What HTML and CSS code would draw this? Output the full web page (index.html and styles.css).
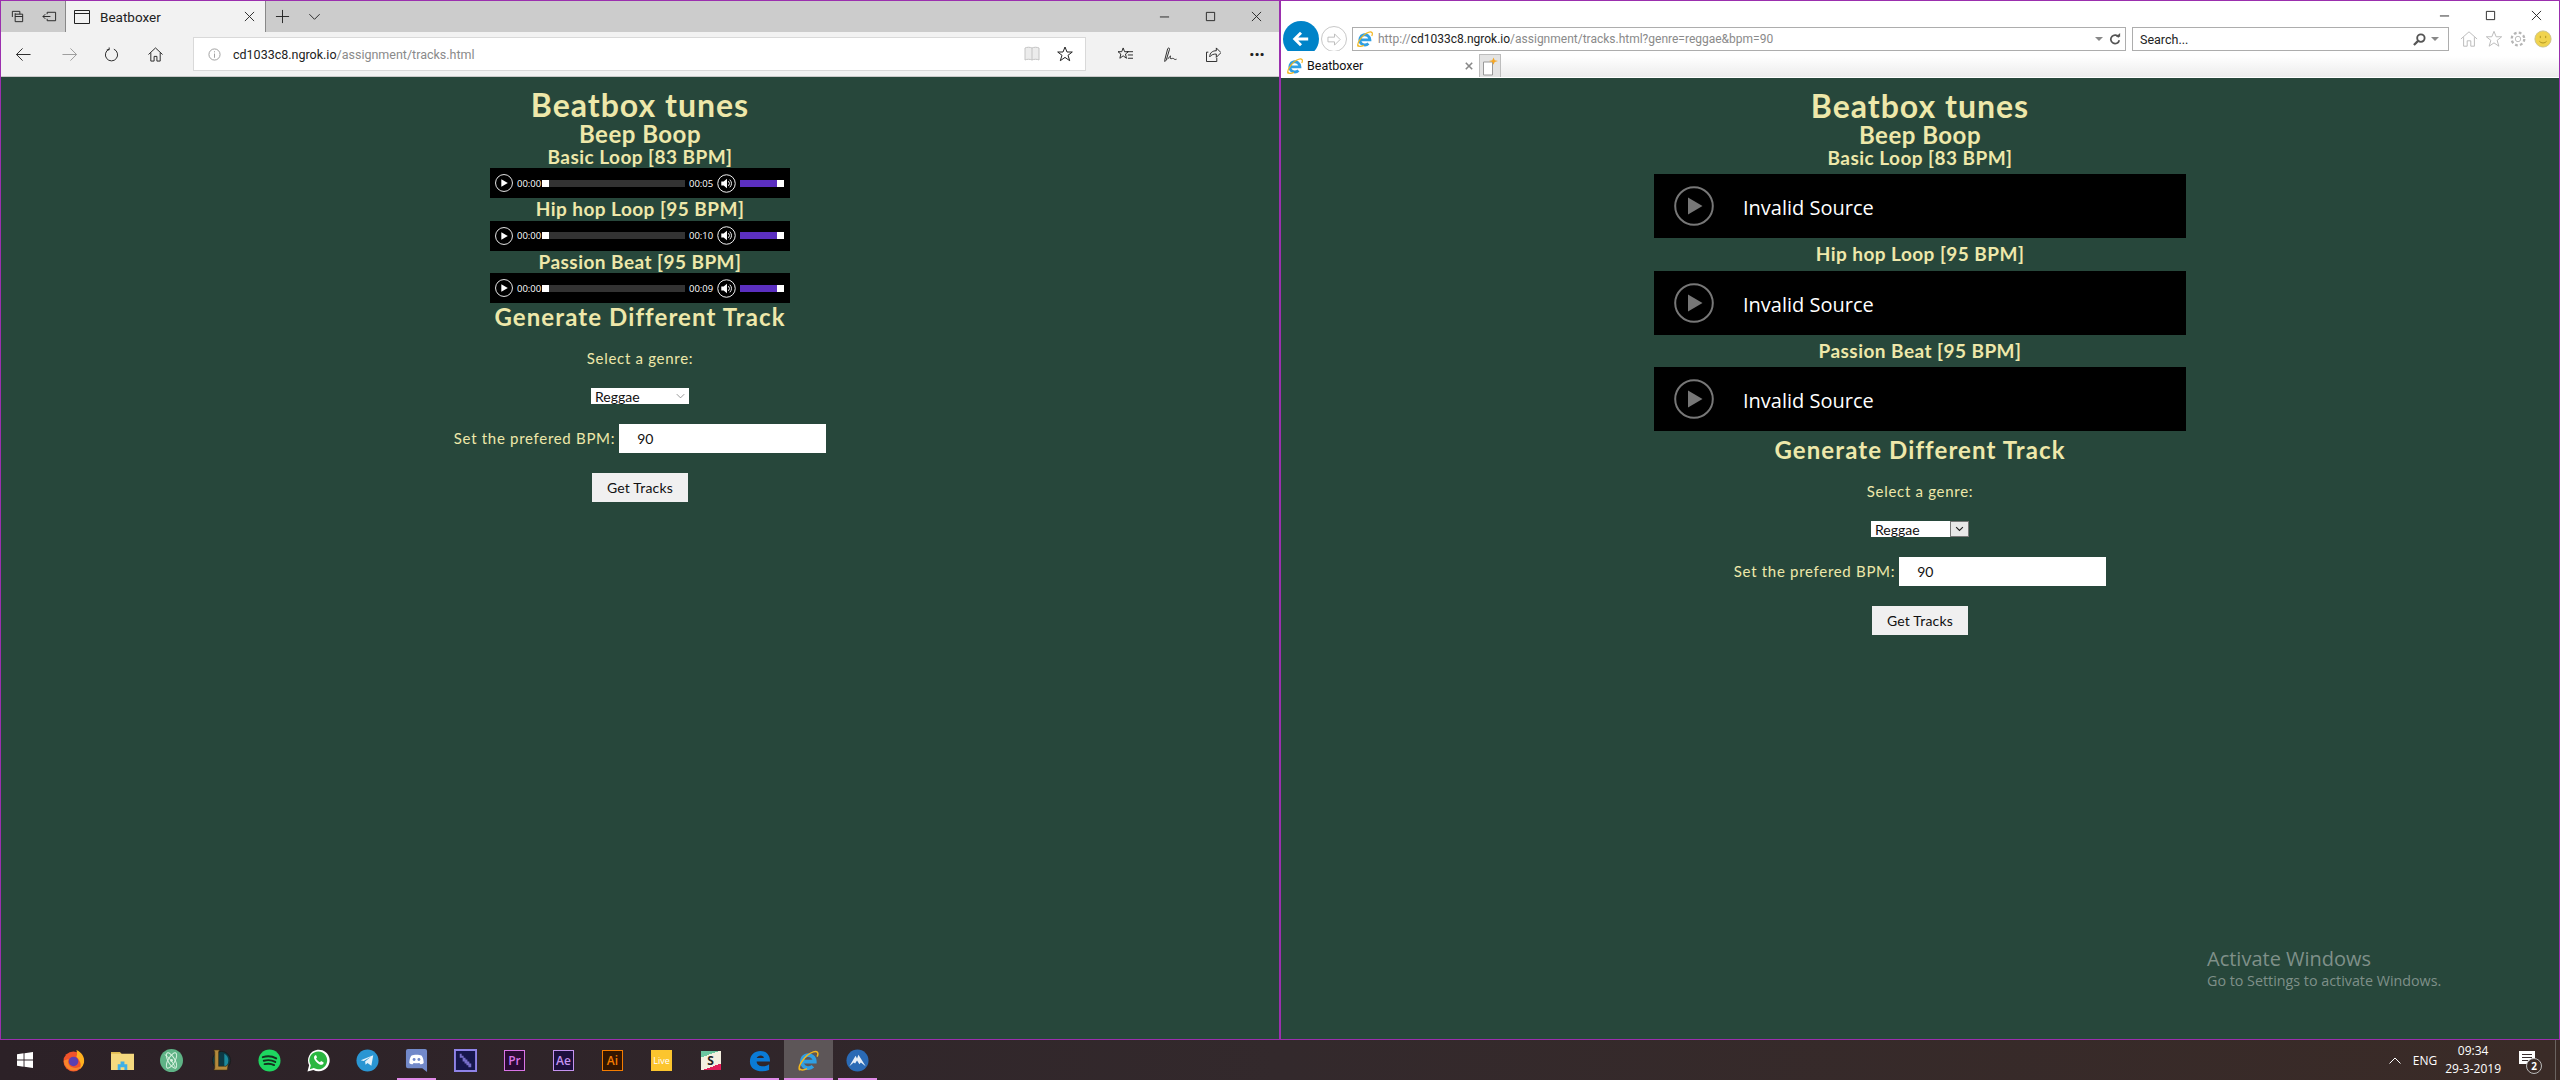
FILE: index.html
```html
<!DOCTYPE html>
<html lang="en">
<head>
    <meta charset="UTF-8">
    <meta name="viewport" content="width=device-width, initial-scale=1.0">
    <title>Beatboxer</title>
    <link rel="stylesheet" href="styles.css">
</head>
<body>
    <svg class="defs" aria-hidden="true">
        <symbol id="ie" viewBox="0 0 24 24">
            <path d="M5.600 13.200H18.600A6.800 6.800 0 1 0 16.600 18" fill="none" stroke="#2f9fe3" stroke-width="3.800"/>
            <path d="M3 22C0 19 8 6 17 3c4-1.300 6 .5 4 5M2.500 20c1 3 5 2 8 .5" fill="none" stroke="#f2b71f" stroke-width="1.600"/>
        </symbol>
        <symbol id="play" viewBox="0 0 40 40">
            <circle cx="20" cy="20" r="18.800" fill="none" stroke="currentColor" stroke-width="2"/>
            <path d="M14 11.500 28.500 20 14 28.500z" fill="currentColor"/>
        </symbol>
        <symbol id="speaker" viewBox="0 0 20 20">
            <circle cx="10" cy="10" r="9.200" fill="none" stroke="#fff" stroke-width="1"/>
            <path d="M4.500 8H7l3.500-3v10L7 12H4.500z" fill="#fff"/>
            <path d="M12 7.500a3.500 3.500 0 0 1 0 5M13.500 6a6 6 0 0 1 0 8" fill="none" stroke="#fff"/>
        </symbol>
    </svg>

    <div class="desktop">
        <!-- left window: edge -->
        <section class="window edge">
            <div class="edge-tabs">
                <span class="edge-btn">
                    <svg viewBox="0 0 16 16"><path d="M5.500 5.500h8v8h-8zM2.500 8.500v-6h8v3M5.500 5.500v-1" class="line"/><path d="M5.500 8h8" class="line"/></svg>
                </span>
                <span class="edge-btn">
                    <svg viewBox="0 0 16 16"><path d="M5.500 3.500h9v9h-9v-2M5.500 5.500v-2M1 8h8M3.500 5.500 1 8l2.500 2.500" class="line"/></svg>
                </span>
                <div class="edge-tab">
                    <svg viewBox="0 0 16 16"><path d="M.5 1.500h15v13H.5zM.5 4.500h15" class="line"/></svg>
                    <span class="edge-tab-title">Beatboxer</span>
                    <svg class="tab-x" viewBox="0 0 12 12"><path d="M1 1l10 10M11 1 1 11" class="line"/></svg>
                </div>
                <span class="edge-btn">
                    <svg viewBox="0 0 16 16"><path d="M8 1v14M1 8h14" class="line"/></svg>
                </span>
                <span class="edge-btn">
                    <svg viewBox="0 0 16 16"><path d="M2.500 5.500 8 11l5.500-5.500" class="line"/></svg>
                </span>
                <div class="win-controls">
                    <span class="win-btn"><svg viewBox="0 0 12 12"><path d="M1 6.500h10" class="line"/></svg></span>
                    <span class="win-btn"><svg viewBox="0 0 12 12"><path d="M1.500 1.500h9v9h-9z" class="line"/></svg></span>
                    <span class="win-btn"><svg viewBox="0 0 12 12"><path d="M1 1l10 10M11 1 1 11" class="line"/></svg></span>
                </div>
            </div>
            <div class="edge-nav">
                <span class="nav-btn"><svg viewBox="0 0 16 16"><path d="M.5 8h15M7 1.500.5 8 7 14.500" class="line"/></svg></span>
                <span class="nav-btn forward"><svg viewBox="0 0 16 16"><path d="M.5 8h15M9 1.500 15.500 8 9 14.500" class="line faded"/></svg></span>
                <span class="nav-btn"><svg viewBox="0 0 16 16"><path d="M10.500 2.300A6.500 6.500 0 1 1 5.500 2.300M5.500 .5v2.500H3" class="line"/></svg></span>
                <span class="nav-btn"><svg viewBox="0 0 16 16"><path d="M.5 8 8 1l7.500 7M3 6v9h3.500v-5h3v5H13V6" class="line"/></svg></span>
                <div class="edge-address">
                    <svg class="info" viewBox="0 0 14 14"><circle cx="7" cy="7" r="6" class="line faded"/><path d="M7 6v4.500M7 3.500v1.200" class="line faded"/></svg>
                    <span class="url-host">cd1033c8.ngrok.io</span><span class="url-path">/assignment/tracks.html</span>
                    <svg class="reading" viewBox="0 0 16 16"><path d="M1 2c2-1 5-1 7 0 2-1 5-1 7 0v12c-2-1-5-1-7 0-2-1-5-1-7 0zM8 2v12" fill="#ececec" stroke="#c4c4c4"/></svg>
                    <svg class="star" viewBox="0 0 16 16"><path d="M8 1l2 5h5.300l-4.300 3.300 1.700 5.400L8 11.400l-4.700 3.300L5 9.300.7 6H6z" class="line"/></svg>
                </div>
                <span class="nav-btn"><svg viewBox="0 0 16 16"><path d="M5.500 1l1.500 4h4L8 7.500 9 12l-3.500-2.600L2 12l1-4.500L0 5h4zM9.500 5h6.500M10.500 8.500H16M10.500 12H16" class="line"/></svg></span>
                <span class="nav-btn"><svg viewBox="0 0 16 16"><path d="M3 13.500 6 2c.5-1.500 2.500-1 2 .5L4.500 14 3 15.500zM6 13c1-1 2-3 3-3.500.5 1-1 3 .5 3s2-1 3 0 2 1 3 .5" class="line"/></svg></span>
                <span class="nav-btn"><svg viewBox="0 0 16 16"><path d="M2.500 5.500h-2v10h11v-4M4 10.500C4 6 7 4 11 4V1l5 5-5 5V7.500C8 7.500 6 8 4 10.500z" class="line"/></svg></span>
                <span class="nav-btn"><span class="more">&middot;&middot;&middot;</span></span>
            </div>
            <main class="page">
                <h1>Beatbox tunes</h1>
                <h2>Beep Boop</h2>
                <h3>Basic Loop [83 BPM]</h3>
                <div class="audio">
                    <svg class="audio-play" viewBox="0 0 40 40"><use href="#play"/></svg>
                    <span class="time">00:00</span>
                    <span class="seek"><span class="seek-thumb"></span></span>
                    <span class="time">00:05</span>
                    <svg class="audio-mute" viewBox="0 0 20 20"><use href="#speaker"/></svg>
                    <span class="volume"></span>
                </div>
                <h3>Hip hop Loop [95 BPM]</h3>
                <div class="audio">
                    <svg class="audio-play" viewBox="0 0 40 40"><use href="#play"/></svg>
                    <span class="time">00:00</span>
                    <span class="seek"><span class="seek-thumb"></span></span>
                    <span class="time">00:10</span>
                    <svg class="audio-mute" viewBox="0 0 20 20"><use href="#speaker"/></svg>
                    <span class="volume"></span>
                </div>
                <h3>Passion Beat [95 BPM]</h3>
                <div class="audio">
                    <svg class="audio-play" viewBox="0 0 40 40"><use href="#play"/></svg>
                    <span class="time">00:00</span>
                    <span class="seek"><span class="seek-thumb"></span></span>
                    <span class="time">00:09</span>
                    <svg class="audio-mute" viewBox="0 0 20 20"><use href="#speaker"/></svg>
                    <span class="volume"></span>
                </div>
                <h2 class="generate">Generate Different Track</h2>
                <form class="track-form">
                    <label class="genre-label">Select a genre:</label>
                    <div class="fake-select">
                        <span>Reggae</span>
                        <svg viewBox="0 0 12 8"><path d="M1 1.500 6 6.500l5-5" fill="none" stroke="#777"/></svg>
                    </div>
                    <div class="bpm-row">
                        <label>Set the prefered BPM:</label>
                        <div class="fake-input">90</div>
                    </div>
                    <button type="button" class="get-tracks">Get Tracks</button>
                </form>
            </main>
        </section>

        <!-- right window: internet explorer -->
        <section class="window ie">
            <div class="ie-title">
                <span class="ie-ctl"><svg viewBox="0 0 12 12"><path d="M1 6.500h10" class="line"/></svg></span>
                <span class="ie-ctl"><svg viewBox="0 0 12 12"><path d="M1.500 1.500h9v9h-9z" class="line"/></svg></span>
                <span class="ie-ctl"><svg viewBox="0 0 12 12"><path d="M1 1l10 10M11 1 1 11" class="line"/></svg></span>
            </div>
            <div class="ie-nav">
                <span class="ie-back"><svg viewBox="0 0 20 20"><path d="M18 10H3M10 3l-7 7 7 7" fill="none" stroke="#fff" stroke-width="3.200"/></svg></span>
                <span class="ie-forward"><svg viewBox="0 0 16 16"><path d="M1 5.500h7V2l6 6-6 6v-3.500H1z" fill="none" stroke="#bbb"/></svg></span>
                <div class="ie-address">
                    <svg class="ie-logo" viewBox="0 0 24 24"><use href="#ie"/></svg>
                    <span class="ie-url"><span class="url-path">http://</span><span class="url-host">cd1033c8.ngrok.io</span><span class="url-path">/assignment/tracks.html?genre=reggae&amp;bpm=90</span></span>
                    <span class="caret"></span>
                    <svg class="ie-refresh" viewBox="0 0 14 14"><path d="M11.500 5A5 5 0 1 0 12 8.500" fill="none" stroke="#555" stroke-width="2"/><path d="M8 4.500h5V0z" fill="#555"/></svg>
                </div>
                <div class="ie-search">
                    <span class="ie-search-text">Search...</span>
                    <svg class="ie-glass" viewBox="0 0 14 14"><circle cx="8.500" cy="5.500" r="4" fill="none" stroke="#555" stroke-width="2"/><path d="M5.500 8.500 1 13" stroke="#555" stroke-width="2.400"/></svg>
                    <span class="caret"></span>
                </div>
                <div class="ie-tools">
                    <svg viewBox="0 0 20 20"><path d="M1 10 10 2l9 8M4 8v10h4v-6h4v6h4V8" fill="none" stroke="#b5b5b5"/></svg>
                    <svg viewBox="0 0 20 20"><path d="M10 1.500l2.400 6h6.100l-5 4 1.900 6.500-5.400-3.700L4.600 18l1.900-6.500-5-4h6.100z" fill="none" stroke="#b5b5b5"/></svg>
                    <svg viewBox="0 0 20 20"><circle cx="10" cy="10" r="3" fill="none" stroke="#b5b5b5"/><circle cx="10" cy="10" r="7" fill="none" stroke="#b5b5b5" stroke-width="2.500" stroke-dasharray="3 2.500"/></svg>
                    <svg viewBox="0 0 20 20"><circle cx="10" cy="10" r="9" fill="#f0d34e" stroke="#c9c28c"/><path d="M6 12.500c2 2.500 6 2.500 8 0" fill="none" stroke="#a98f1e"/><path d="M7 6.500v2.500M13 6.500v2.500" stroke="#a98f1e"/></svg>
                </div>
            </div>
            <div class="ie-tabs">
                <div class="ie-tab">
                    <svg class="ie-logo" viewBox="0 0 24 24"><use href="#ie"/></svg>
                    <span>Beatboxer</span>
                    <svg class="ie-tab-x" viewBox="0 0 10 10"><path d="M1 1l8 8M9 1 1 9" stroke="#888" stroke-width="2"/></svg>
                </div>
                <div class="ie-newtab">
                    <svg viewBox="0 0 16 18"><path d="M1.500 4.500h9v13h-9z" fill="#fff" stroke="#999"/><path d="M11.500 0l1.200 2.800L16 3.500l-3.300 1-1.200 2.700-1.200-2.700-3.300-1 3.300-.7z" fill="#f5a623"/></svg>
                </div>
            </div>
            <main class="page ie-page">
                <h1>Beatbox tunes</h1>
                <h2>Beep Boop</h2>
                <h3>Basic Loop [83 BPM]</h3>
                <div class="ie-audio">
                    <svg class="ie-audio-play" viewBox="0 0 40 40"><use href="#play"/></svg>
                    <span>Invalid Source</span>
                </div>
                <h3>Hip hop Loop [95 BPM]</h3>
                <div class="ie-audio">
                    <svg class="ie-audio-play" viewBox="0 0 40 40"><use href="#play"/></svg>
                    <span>Invalid Source</span>
                </div>
                <h3>Passion Beat [95 BPM]</h3>
                <div class="ie-audio">
                    <svg class="ie-audio-play" viewBox="0 0 40 40"><use href="#play"/></svg>
                    <span>Invalid Source</span>
                </div>
                <h2 class="generate">Generate Different Track</h2>
                <form class="track-form">
                    <label class="genre-label">Select a genre:</label>
                    <div class="fake-select ie-select">
                        <span>Reggae</span>
                        <i class="ie-select-btn"><svg viewBox="0 0 12 8"><path d="M1.500 1.500 6 6l4.500-4.500" fill="none" stroke="#222" stroke-width="1.500"/></svg></i>
                    </div>
                    <div class="bpm-row">
                        <label>Set the prefered BPM:</label>
                        <div class="fake-input">90</div>
                    </div>
                    <button type="button" class="get-tracks">Get Tracks</button>
                </form>
            </main>
            <div class="activate">
                <div class="activate-title">Activate Windows</div>
                <div class="activate-sub">Go to Settings to activate Windows.</div>
            </div>
        </section>
    </div>

    <footer class="taskbar">
        <span class="task task-start">
            <svg viewBox="0 0 18 18"><path d="M0 2.600 7.400 1.500v7H0zM8.400 1.400 18 0v8.500H8.400zM0 9.500h7.400v7L0 15.400zM8.400 9.500H18V18l-9.600-1.400z" fill="#fff"/></svg>
        </span>
        <span class="task">
            <svg viewBox="0 0 24 24"><circle cx="12" cy="13" r="10.500" fill="#f0532b"/><path d="M15 1c5 2 9 7 8 13-1 4-3 6-5 7 2-3 2-6 0-9-1-2-2-3-3-4 1-2 1-4 0-7z" fill="#ffb11f"/><circle cx="12" cy="13" r="5" fill="#5c3fb0"/><path d="M2 12c0 6 5 11 11 10.500 3 0 6-2 7-5-3 3-9 3-12 0-2-2-2-5-1-7z" fill="#f8852a"/></svg>
        </span>
        <span class="task">
            <svg viewBox="0 0 24 24"><path d="M0 3h9l2 2h13v17H0z" fill="#f5d97f"/><path d="M0 3h9l2 2H0z" fill="#e0bb52"/><path d="M7 22v-6h3v-3h4v3h3v6h-3v-3h-4v3z" fill="#3fb0e8"/></svg>
        </span>
        <span class="task">
            <svg viewBox="0 0 24 24"><circle cx="12" cy="12" r="12" fill="#5fb386"/><g fill="none" stroke="#d8f2e0"><ellipse cx="12" cy="12" rx="9" ry="3.500" transform="rotate(60 12 12)"/><ellipse cx="12" cy="12" rx="9" ry="3.500" transform="rotate(120 12 12)"/><path d="M5 6c3 1 9 9 11 13"/></g><circle cx="12" cy="12" r="1.500" fill="#d8f2e0"/></svg>
        </span>
        <span class="task">
            <svg viewBox="0 0 24 24"><circle cx="13" cy="12" r="9.500" fill="#0c3a45" stroke="#1b1b1b"/><path d="M16 5a8 8 0 0 1 0 14z" fill="#1c8a9c"/><path d="M5 1h6l-1 2v15h8l2-2-1 6H5l1-2V3z" fill="#b58a3c" stroke="#3c2e12" stroke-width=".6"/></svg>
        </span>
        <span class="task">
            <svg viewBox="0 0 24 24"><circle cx="12" cy="12" r="11.500" fill="#1ed760"/><path d="M5 8.500c5-1.500 10-1 14 1.300M6 12.300c4-1.100 8.500-.8 12 1.200M6.800 15.800c3.500-.8 7.200-.6 10 1" fill="none" stroke="#14301f" stroke-width="2" stroke-linecap="round"/></svg>
        </span>
        <span class="task">
            <svg viewBox="0 0 24 24"><path d="M.5 23.500 2.200 17A11.300 11.300 0 1 1 6.700 21.800z" fill="#fff"/><path d="M2.900 21 4 17A9.300 9.300 0 1 1 7.100 19.900z" fill="#2bb741"/><path d="M8.500 6.500c-2 1.500-1.500 4 1 6.800s5.500 4 7 2.700c1-1 1-2 .5-2.300l-2.300-1.200-1.200 1.300c-1-.3-3.500-2.500-4-4l1-1.200L9.500 6.500z" fill="#fff"/></svg>
        </span>
        <span class="task">
            <svg viewBox="0 0 24 24"><circle cx="12" cy="12" r="11.500" fill="#2a96d3"/><path d="M5 11.800 18 6.500l-2 11-4-3-2 2-.5-3.500 6-5-7.500 4.500z" fill="#e4f2fa"/></svg>
        </span>
        <span class="task is-open">
            <svg viewBox="0 0 24 24"><path d="M3 0h18a2 2 0 0 1 2 2v22l-5-4H3a2 2 0 0 1-2-2V2a2 2 0 0 1 2-2z" fill="#7289c9"/><path d="M6.500 7c3-1.500 8-1.500 11 0 1.500 2.500 2 5 2 7.500-1 1-2.500 1.500-3.500 1.500l-1-1.500c-2 .6-4 .6-6 0L8 16c-1 0-2.500-.5-3.500-1.500 0-2.500.5-5 2-7.500z" fill="#fff"/><circle cx="9.500" cy="11" r="1.500" fill="#7289c9"/><circle cx="14.500" cy="11" r="1.500" fill="#7289c9"/></svg>
        </span>
        <span class="task">
            <svg viewBox="0 0 24 24"><path d="M1 1h22v22H1z" fill="#16164c" stroke="#8f83e8" stroke-width="2"/><path d="M6 5h2v2h2v2h2v2h2v2h2v2h2v4H15v-2h-2v-2h-2v-2H9V9H6z" fill="#8f83e8" opacity=".8"/></svg>
        </span>
        <span class="task"><span class="adobe adobe-pr">Pr</span></span>
        <span class="task"><span class="adobe adobe-ae">Ae</span></span>
        <span class="task"><span class="adobe adobe-ai">Ai</span></span>
        <span class="task"><span class="live">Live</span></span>
        <span class="task"><span class="slack">S</span></span>
        <span class="task is-open">
            <svg viewBox="0 0 24 24"><path d="M2 13C2 6 7 2 13 2c6 0 10 4 10 11H9c0 5 8 7 13 3v6c-8 3-20 1-20-9zM9 9.500h7.500C16.500 6 10.500 6 9 9.500z" fill="#0a7bd6"/></svg>
        </span>
        <span class="task is-open is-active">
            <svg viewBox="0 0 24 24"><use href="#ie"/></svg>
        </span>
        <span class="task is-open">
            <svg viewBox="0 0 24 24"><circle cx="12" cy="12" r="11.500" fill="#2a6ab5"/><path d="M3.500 18 10 7l1.500 3L13 6l7.500 12-5-4-1.500 2-2.500-4-2 3-1.500-1z" fill="#e6eef7"/></svg>
        </span>
        <div class="tray">
            <svg class="tray-up" viewBox="0 0 12 7"><path d="M.5 6.500 6 1l5.500 5.500" fill="none" stroke="#fff"/></svg>
            <span class="tray-lang">ENG</span>
            <span class="tray-clock"><span>09:34</span><span>29-3-2019</span></span>
            <span class="tray-notify">
                <svg viewBox="0 0 16 14"><path d="M0 0h16v13H0z" fill="#fff"/><path d="M3 3.500h10M3 6.500h10M3 9.500h6" stroke="#3a2f2f"/></svg>
                <span class="tray-badge">2</span>
            </span>
            <span class="show-desktop"></span>
        </div>
    </footer>
</body>
</html>
```

FILE: styles.css
```css
* {
    box-sizing: border-box;
}
html, body {
    margin: 0;
    height: 100%;
}
body {
    display: flex;
    flex-direction: column;
    width: 2560px;
    height: 1080px;
    overflow: hidden;
    font-family: "Open Sans", sans-serif;
    background-color: #27473b;
}
.defs {
    position: absolute;
    width: 0;
    height: 0;
}
.line {
    fill: none;
    stroke: #222;
    stroke-width: 1;
}
.faded {
    stroke: #999;
}

.desktop {
    display: flex;
    height: 1040px;
}
.window {
    display: flex;
    flex-direction: column;
    position: relative;
    width: 1280px;
    border: 1px solid #9b2fae;
    background-color: #27473b;
}

/* edge chrome */
.edge-tabs {
    display: flex;
    height: 31px;
    background-color: #cccccc;
}
.edge-btn {
    display: flex;
    align-items: center;
    justify-content: center;
    width: 32px;
}
.edge-btn svg {
    width: 15px;
    height: 15px;
}
.edge-tab {
    display: flex;
    align-items: center;
    width: 201px;
    padding: 0 8px 0 8px;
    background-color: #f2f2f2;
    border-left: 1px solid #888;
    border-right: 1px solid #888;
    font-family: "Roboto", sans-serif;
    font-size: 13.500px;
    color: #222;
}
.edge-tab > svg:first-child {
    width: 16px;
    height: 16px;
}
.edge-tab-title {
    flex: 1;
    margin-left: 10px;
}
.tab-x {
    width: 11px;
    height: 11px;
    margin-right: 2px;
}
.win-controls {
    display: flex;
    margin-left: auto;
}
.win-btn {
    display: flex;
    align-items: center;
    justify-content: center;
    width: 46px;
}
.win-btn svg {
    width: 11px;
    height: 11px;
}
.edge-nav {
    display: flex;
    align-items: center;
    height: 45px;
    background-color: #f2f2f2;
    border-bottom: 1px solid #c9c9c9;
}
.nav-btn {
    display: flex;
    align-items: center;
    justify-content: center;
    width: 44px;
    height: 100%;
}
.nav-btn svg {
    width: 15px;
    height: 15px;
}
.forward {
    padding-left: 4px;
}
.more {
    font-size: 18px;
    font-weight: 700;
    color: #222;
}
.edge-address {
    display: flex;
    align-items: center;
    flex: 1;
    height: 34px;
    margin: 0 17px 0 16px;
    padding: 0 12px 0 14px;
    background-color: #fff;
    border: 1px solid #d9d9d9;
    font-family: "Roboto", sans-serif;
    font-size: 12.500px;
}
.info {
    width: 13px;
    height: 13px;
    margin-right: 12px;
}
.url-host {
    color: #222;
}
.url-path {
    color: #8a8a8a;
}
.reading {
    width: 16px;
    height: 16px;
    margin-left: auto;
}
.star {
    width: 16px;
    height: 16px;
    margin-left: 17px;
}

/* ie chrome */
.ie-title {
    display: flex;
    justify-content: flex-end;
    height: 26px;
    background-color: #fff;
}
.ie-ctl {
    display: flex;
    align-items: center;
    justify-content: center;
    width: 46px;
    padding-top: 3px;
}
.ie-ctl svg {
    width: 11px;
    height: 11px;
}
.ie-nav {
    display: flex;
    align-items: center;
    height: 24px;
    padding-left: 2px;
    background-color: #fff;
}
.ie-back {
    display: flex;
    align-items: center;
    justify-content: center;
    flex: none;
    width: 36px;
    height: 36px;
    border-radius: 50%;
    background-color: #0083c8;
}
.ie-back svg {
    width: 18px;
    height: 18px;
}
.ie-forward {
    display: flex;
    align-items: center;
    justify-content: center;
    flex: none;
    width: 26px;
    height: 26px;
    margin-left: 2px;
    border: 1px solid #c8c8c8;
    border-radius: 50%;
}
.ie-forward svg {
    width: 15px;
    height: 15px;
}
.ie-address {
    display: flex;
    align-items: center;
    width: 774px;
    height: 24px;
    margin-left: 5px;
    padding: 0 4px 0 3px;
    border: 1px solid #adadad;
}
.ie-logo {
    flex: none;
    width: 18px;
    height: 18px;
}
.ie-url {
    margin-left: 4px;
    font-family: "Roboto", sans-serif;
    font-size: 12px;
    white-space: nowrap;
}
.caret {
    flex: none;
    width: 0;
    height: 0;
    margin-left: auto;
    border-left: 4px solid transparent;
    border-right: 4px solid transparent;
    border-top: 4px solid #888;
}
.ie-refresh {
    width: 12px;
    height: 12px;
    margin-left: 6px;
}
.ie-search {
    display: flex;
    align-items: center;
    width: 317px;
    height: 24px;
    margin-left: 6px;
    padding: 0 9px 0 7px;
    border: 1px solid #adadad;
    font-family: "Roboto", sans-serif;
    font-size: 12.500px;
    color: #222;
}
.ie-search-text {
    flex: 1;
}
.ie-glass {
    width: 13px;
    height: 13px;
}
.ie-search .caret {
    margin-left: 5px;
}
.ie-tools {
    display: flex;
    gap: 6.500px;
    margin-left: 11px;
}
.ie-tools svg {
    width: 18px;
    height: 18px;
}
.ie-tabs {
    display: flex;
    height: 27px;
    padding-top: 3px;
    background: linear-gradient(#fff, #fff 20%, #ececec);
    border-bottom: 1px solid #fff;
}
.ie-tab {
    display: flex;
    align-items: center;
    width: 198px;
    padding: 0 4px 0 5px;
    background-color: #fff;
    font-family: "Roboto", sans-serif;
    font-size: 12.500px;
    color: #111;
}
.ie-tab span {
    flex: 1;
    margin-left: 3px;
}
.ie-tab-x {
    width: 8px;
    height: 8px;
    margin-right: 2px;
}
.ie-newtab {
    display: flex;
    align-items: center;
    justify-content: center;
    width: 22px;
    background-color: #e3e3e3;
    border: 1px solid #bdbdbd;
    border-bottom: none;
}
.ie-newtab svg {
    width: 16px;
    height: 19px;
}

/* the page itself */
.page {
    display: flex;
    flex-direction: column;
    align-items: center;
    flex: 1;
    padding-top: 10px;
    font-family: "Lato", sans-serif;
    color: #eee8aa;
    text-align: center;
}
h1, h2, h3 {
    margin: 0;
    font-weight: 700;
    white-space: nowrap;
}
h1 {
    font-size: 32px;
    line-height: 36px;
    letter-spacing: 1px;
}
h2 {
    font-size: 24px;
    line-height: 22.500px;
    letter-spacing: .5px;
}
h3 {
    font-size: 19px;
    line-height: 22.500px;
    letter-spacing: .45px;
}
.generate {
    line-height: 28px;
    letter-spacing: 1.100px;
}
.audio {
    display: flex;
    align-items: center;
    width: 300px;
    height: 30px;
    padding: 0 6px 0 5px;
    background-color: #000;
    color: #fff;
}
.audio-play {
    width: 18px;
    height: 18px;
    flex: none;
}
.audio-mute {
    width: 19px;
    height: 19px;
    flex: none;
    margin: 0 4px 0 3px;
}
.audio .audio-play {
    color: #fff;
}
.time {
    width: 22px;
    margin: 0 3px 0 4px;
    font-family: "Open Sans", sans-serif;
    font-size: 9.500px;
    text-align: center;
}
.seek {
    display: block;
    flex: 1;
    height: 7px;
    background-color: #333;
}
.seek-thumb {
    display: block;
    width: 7px;
    height: 7px;
    background-color: #fff;
}
.volume {
    display: block;
    width: 44px;
    height: 7px;
    background: linear-gradient(to right, #5b2fc0 37px, #fff 37px);
}
.ie-audio {
    display: flex;
    align-items: center;
    width: 532px;
    height: 64px;
    margin: 5px 0;
    padding-left: 20px;
    background-color: #000;
    font-family: "Open Sans", sans-serif;
    font-size: 20px;
    color: #fff;
}
.ie-audio-play {
    width: 40px;
    height: 40px;
    color: #777;
    margin-right: 29px;
}
.ie-audio span {
    padding-top: 3px;
}

.track-form {
    display: flex;
    flex-direction: column;
    align-items: center;
    font-size: 15px;
    letter-spacing: .7px;
}
.genre-label {
    margin-top: 18px;
    line-height: 18px;
}
.fake-select {
    display: flex;
    align-items: center;
    justify-content: space-between;
    width: 98px;
    height: 16px;
    margin-top: 21px;
    padding: 0 4px;
    background-color: #fff;
    font-size: 14px;
    letter-spacing: 0;
    color: #111;
    text-align: left;
}
.fake-select svg {
    width: 9px;
    height: 6px;
}
.ie-select {
    padding-right: 0;
}
.ie-select-btn {
    display: flex;
    align-items: center;
    justify-content: center;
    width: 19px;
    height: 16px;
    background-color: #e8e8e8;
    border: 1px solid #777;
}
.bpm-row {
    display: flex;
    align-items: center;
    gap: 4px;
    height: 29px;
    margin-top: 20px;
}
.bpm-row label {
    padding-bottom: 2px;
}
.fake-input {
    width: 207px;
    height: 29px;
    padding: 0 18px;
    background-color: #fff;
    font-size: 14px;
    line-height: 29px;
    letter-spacing: 0;
    color: #111;
    text-align: left;
}
.get-tracks {
    width: 96px;
    height: 29px;
    margin-top: 20px;
    background-color: #f0f0f0;
    border: none;
    font-family: "Lato", sans-serif;
    font-size: 14px;
    letter-spacing: .2px;
    color: #111;
}

.activate {
    position: absolute;
    left: 926px;
    top: 946px;
    color: #7f9089;
    pointer-events: none;
}
.activate-title {
    font-size: 20px;
    line-height: 24px;
}
.activate-sub {
    font-size: 14.300px;
    line-height: 20px;
}

/* taskbar */
.taskbar {
    display: flex;
    height: 40px;
    background: linear-gradient(to right, #2c2127, #33292c 50%, #3a2b27);
}
.task {
    position: relative;
    display: flex;
    align-items: center;
    justify-content: center;
    width: 49px;
    height: 40px;
}
.task > svg {
    width: 23px;
    height: 23px;
}
.task-start > svg {
    width: 16px;
    height: 16px;
}
.is-open::after {
    content: "";
    position: absolute;
    left: 5px;
    right: 5px;
    bottom: 0;
    height: 2px;
    background-color: #e08ae8;
}
.is-active {
    background-color: #5d5658;
}
.is-active::after {
    left: 0;
    right: 0;
}
.adobe {
    display: flex;
    align-items: center;
    justify-content: center;
    width: 21px;
    height: 21px;
    font-size: 12px;
    font-weight: 600;
}
.adobe-pr {
    background-color: #2a0a33;
    border: 1px solid #d974e6;
    color: #d974e6;
}
.adobe-ae {
    background-color: #1d0f3d;
    border: 1px solid #c493f0;
    color: #c493f0;
}
.adobe-ai {
    background-color: #331500;
    border: 1px solid #f57c00;
    color: #f57c00;
}
.live {
    display: flex;
    align-items: center;
    justify-content: center;
    width: 21px;
    height: 21px;
    background-color: #fcc52e;
    font-size: 9px;
    color: #fff;
}
.slack {
    display: flex;
    align-items: center;
    justify-content: center;
    width: 20px;
    height: 19px;
    background: linear-gradient(160deg, #6cc6a0 25%, #f4efe0 25%, #f4efe0 75%, #e01e5a 75%);
    font-size: 12px;
    font-weight: 700;
    color: #222;
}
.tray {
    display: flex;
    align-items: center;
    margin-left: auto;
    color: #fff;
    font-size: 12px;
}
.tray-up {
    width: 12px;
    height: 7px;
    margin-right: 12px;
}
.tray-lang {
    margin-right: 8px;
}
.tray-clock {
    display: flex;
    flex-direction: column;
    align-items: center;
    line-height: 18px;
    margin-right: 18px;
}
.tray-notify {
    position: relative;
    width: 16px;
    height: 14px;
    margin-top: -4px;
    margin-right: 20px;
}
.tray-notify svg {
    display: block;
    width: 16px;
    height: 14px;
}
.tray-badge {
    position: absolute;
    left: 7px;
    top: 7px;
    width: 16px;
    height: 16px;
    border: 1px solid #bbb;
    border-radius: 50%;
    background-color: #3a2b27;
    font-size: 10px;
    font-weight: 700;
    line-height: 14px;
    text-align: center;
}
.show-desktop {
    width: 1px;
    height: 40px;
    margin-right: 4px;
    background-color: #6a6360;
}
```
